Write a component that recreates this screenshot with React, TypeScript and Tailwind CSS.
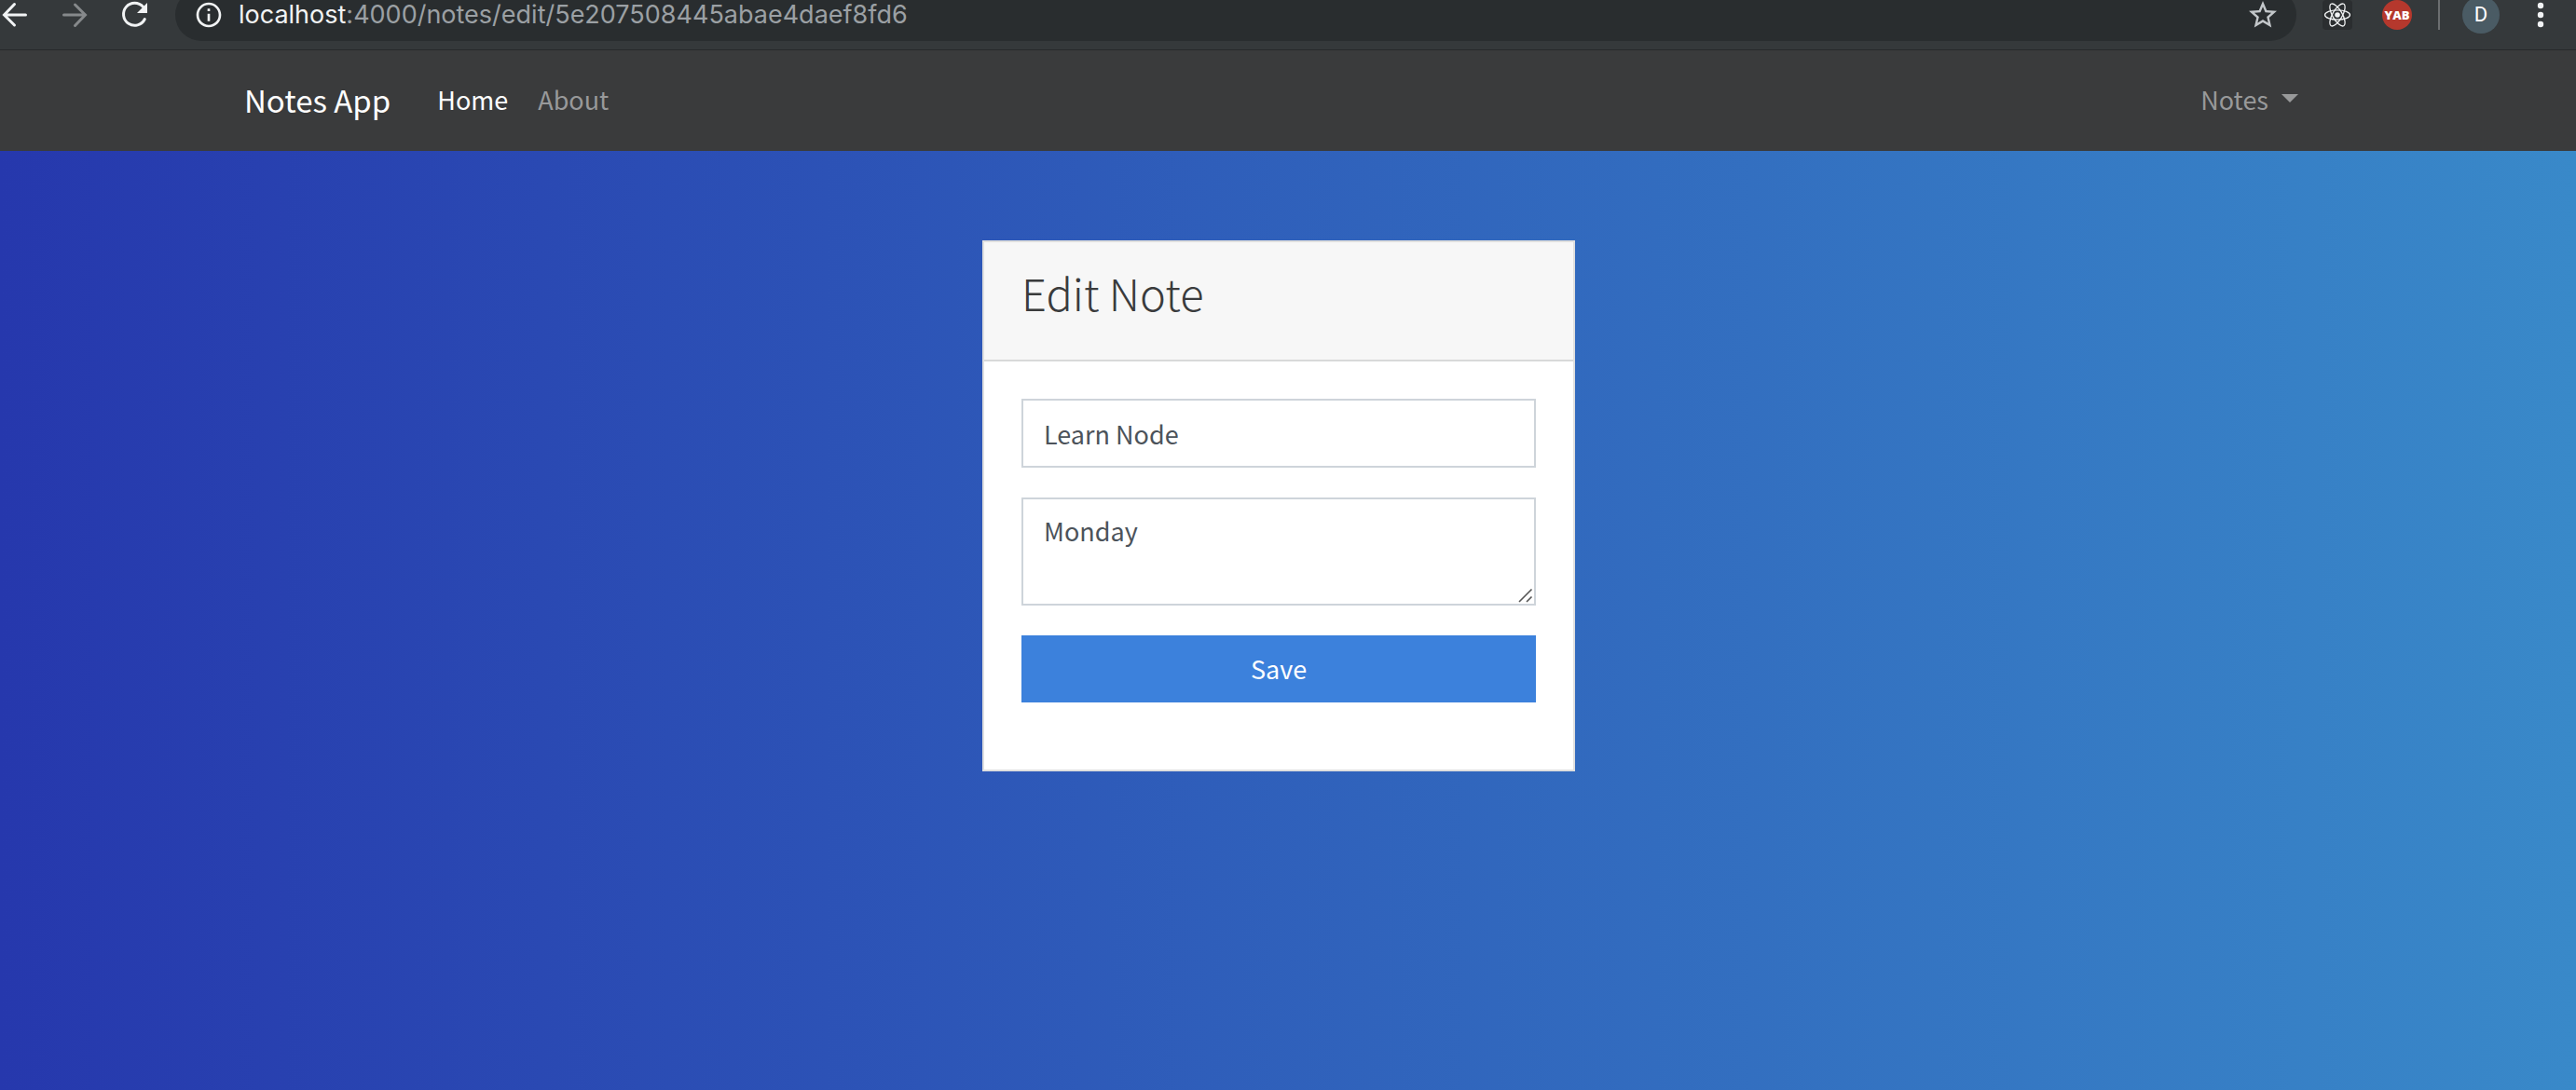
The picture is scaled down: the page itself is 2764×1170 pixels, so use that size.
import { MdInfoOutline, MdStarBorder } from "react-icons/md";

const note = {
  id: "5e207508445abae4daef8fd6",
  title: "Learn Node",
  description: "Monday",
};

function ArrowIcon({ className }: { className: string }) {
  return (
    <svg viewBox="0 0 32 32" className={className} fill="none" stroke="currentColor" strokeWidth="3" strokeLinecap="round" aria-hidden="true">
      <path d="M27.500 16H5M15.500 4.500L4.500 16L15.500 27" strokeLinejoin="miter" />
    </svg>
  );
}

function ReloadIcon() {
  return (
    <svg viewBox="0 0 32 32" className="size-8" aria-hidden="true">
      <path d="M25.500 7.300A12 12 0 1 0 27.300 20.500" fill="none" stroke="currentColor" strokeWidth="3" strokeLinecap="round" />
      <path d="M30 3V14H19Z" fill="currentColor" />
    </svg>
  );
}

function AtomIcon() {
  return (
    <svg viewBox="0 0 32 32" className="size-8 rounded-sm bg-[#2b2e30]" fill="none" stroke="currentColor" strokeWidth="1.300" aria-hidden="true">
      <circle cx="16" cy="16" r="2.800" fill="currentColor" stroke="none" />
      <ellipse cx="16" cy="16" rx="13.500" ry="5.200" />
      <ellipse cx="16" cy="16" rx="13.500" ry="5.200" transform="rotate(60 16 16)" />
      <ellipse cx="16" cy="16" rx="13.500" ry="5.200" transform="rotate(120 16 16)" />
    </svg>
  );
}

function BrowserBar() {
  return (
    <header className="h-[54px] overflow-hidden border-b border-[#27292b] bg-[#35393b] text-[#f1f3f4]">
      <div className="-mt-3 flex h-14 items-center">
        <div className="flex w-[188px] shrink-0 items-center gap-8">
          <button aria-label="Back">
            <ArrowIcon className="size-8" />
          </button>
          <button aria-label="Forward" className="text-[#86898b]">
            <ArrowIcon className="size-8 rotate-180" />
          </button>
          <button aria-label="Reload">
            <ReloadIcon />
          </button>
        </div>
        <div className="flex h-14 flex-1 items-center justify-between rounded-full bg-[#292d2f] pr-[18px] pl-5">
          <div className="flex items-center gap-4">
            <MdInfoOutline className="size-8" />
            <p className="font-['Inter',sans-serif] text-[27px] leading-8 text-[#9ba0a4]">
              <span className="text-[#f1f3f4]">localhost</span>:4000/notes/edit/{note.id}
            </p>
          </div>
          <button aria-label="Bookmark this page" className="text-[#c3c7ca]">
            <MdStarBorder className="size-9" />
          </button>
        </div>
        <div className="flex shrink-0 items-center pr-[34px] pl-7">
          <button aria-label="React developer tools">
            <AtomIcon />
          </button>
          <button className="ml-8 size-8 rounded-full bg-[#b5382d] text-center font-['Open_Sans',sans-serif] text-[13px] leading-8 font-extrabold text-white">
            YAB
          </button>
          <span className="ml-7 h-8 w-0.5 bg-[#6b6e70]" />
          <button className="ml-6 size-10 rounded-full bg-[#4a5b64] font-['Roboto',sans-serif] text-[22px] leading-10 text-white">
            D
          </button>
          <button aria-label="Menu" className="ml-10">
            <svg viewBox="0 0 8 32" className="h-8 w-2" fill="currentColor" aria-hidden="true">
              <circle cx="4" cy="6" r="3.200" />
              <circle cx="4" cy="16" r="3.200" />
              <circle cx="4" cy="26" r="3.200" />
            </svg>
          </button>
        </div>
      </div>
    </header>
  );
}

function Navbar() {
  return (
    <nav className="h-[108px] bg-[#3a3b3c] pr-5 pb-0.5">
      <div className="mx-auto flex h-full max-w-[2220px] items-center text-[27px] leading-10 text-[#98999a]">
        <a href="#notes-app" className="text-[33px] text-white">
          Notes App
        </a>
        <a href="#home" className="ml-[50px] text-white">
          Home
        </a>
        <a href="#about" className="ml-8">
          About
        </a>
        <button className="mr-4 ml-auto flex items-center gap-3.5">
          Notes
          <svg viewBox="0 0 18 9" className="mb-1 h-[9px] w-[18px]" fill="currentColor" aria-hidden="true">
            <path d="M0 0H18L9 9Z" />
          </svg>
        </button>
      </div>
    </nav>
  );
}

function EditNoteCard() {
  return (
    <section className="w-[636px] border-2 border-[#dfdfdf] bg-white">
      <div className="h-32 border-b-2 border-[#d8d9d9] bg-[#f7f7f7] px-10 pt-[22px]">
        <h1 className="text-[47px] leading-[64px] font-light text-[#3a3b3c]">Edit Note</h1>
      </div>
      <form className="flex flex-col gap-8 px-10 pt-10 pb-[72px] text-[27px] leading-10" onSubmit={(e) => e.preventDefault()}>
        <input
          aria-label="Title"
          defaultValue={note.title}
          className="h-[74px] border-2 border-[#ced4da] px-[22px] text-[#4c535a] outline-none"
        />
        <div className="relative flex">
          <textarea
            aria-label="Description"
            defaultValue={note.description}
            className="h-[116px] flex-1 resize border-2 border-[#ced4da] px-[22px] py-3.5 text-[#4c535a] outline-none [&::-webkit-resizer]:bg-transparent"
          />
          <svg
            viewBox="0 0 18 18"
            className="pointer-events-none absolute right-0.5 bottom-0.5 size-[18px]"
            fill="none"
            stroke="#555555"
            strokeWidth="1.600"
            aria-hidden="true"
          >
            <path d="M2 16L15.500 2.500M10 16L15.500 10.500" />
          </svg>
        </div>
        <button type="submit" className="h-[72px] bg-[#3c81dc] text-white">
          Save
        </button>
      </form>
    </section>
  );
}

export default function App() {
  return (
    <div className="flex min-h-screen flex-col font-['Noto_Sans_CJK_JP','Noto_Sans_CJK_SC',sans-serif]">
      <BrowserBar />
      <Navbar />
      <main className="flex flex-1 items-start justify-center bg-linear-to-r/srgb from-[#2638ad] to-[#3989c9] pt-24 pr-5">
        <EditNoteCard />
      </main>
    </div>
  );
}
